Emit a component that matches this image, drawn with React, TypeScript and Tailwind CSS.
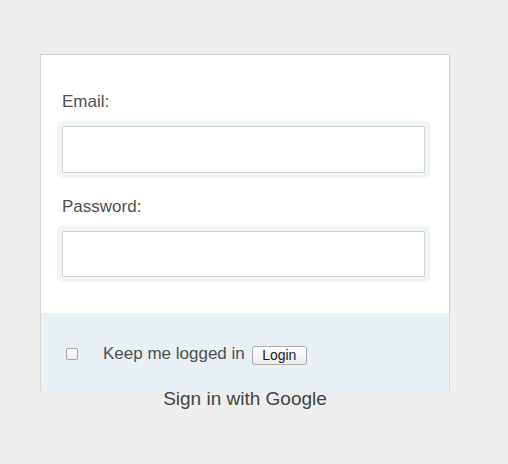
import React from "react";

export default function App() {
  return (
    <div
      className="min-h-[464px] w-[508px] bg-[#eeeeee] pt-[54px] pl-[40px]"
      style={{ fontFamily: '"Liberation Sans", Arial, sans-serif' }}
    >
      <div className="w-[410px] h-[337px] border border-b-0 border-[#d5d5d5] bg-white flex flex-col">
        <div className="h-[258px] pl-[21px] pt-[37px] flex flex-col">
          <label className="text-[17px] leading-[20px] text-[#4f4f4f]">Email:</label>
          <input
            type="text"
            className="mt-[14px] w-[363px] h-[47px] rounded-[1px] border border-[#ccd5d8] bg-white shadow-[0_0_0_5px_#f3f6f7] outline-none"
          />
          <label className="mt-[24px] text-[17px] leading-[20px] text-[#4f4f4f]">Password:</label>
          <input
            type="password"
            className="mt-[14px] w-[363px] h-[46px] rounded-[1px] border border-[#ccd5d8] bg-white shadow-[0_0_0_5px_#f3f6f7] outline-none"
          />
        </div>
        <div className="flex-1 bg-[#e9f0f3] pl-[25px] pt-[31px]">
          <div className="flex items-center h-[20px]">
            <span className="w-[12px] h-[12px] rounded-[2px] border border-[#a8a8a8] bg-gradient-to-b from-white to-[#ececec]" />
            <span className="ml-[25px] text-[17px] leading-[20px] text-[#4f4f4f]">Keep me logged in</span>
            <button className="ml-[7px] mt-[3px] w-[55px] h-[19px] rounded-[3px] border border-[#aaaaaa] bg-gradient-to-b from-white to-[#ebebeb] text-[14px] leading-[17px] text-[#1a1a1a] flex items-center justify-center">
              Login
            </button>
          </div>
        </div>
      </div>
      <div className="w-[410px] -mt-[2px] text-center text-[19px] leading-[20px] text-[#444444]">
        Sign in with Google
      </div>
    </div>
  );
}
